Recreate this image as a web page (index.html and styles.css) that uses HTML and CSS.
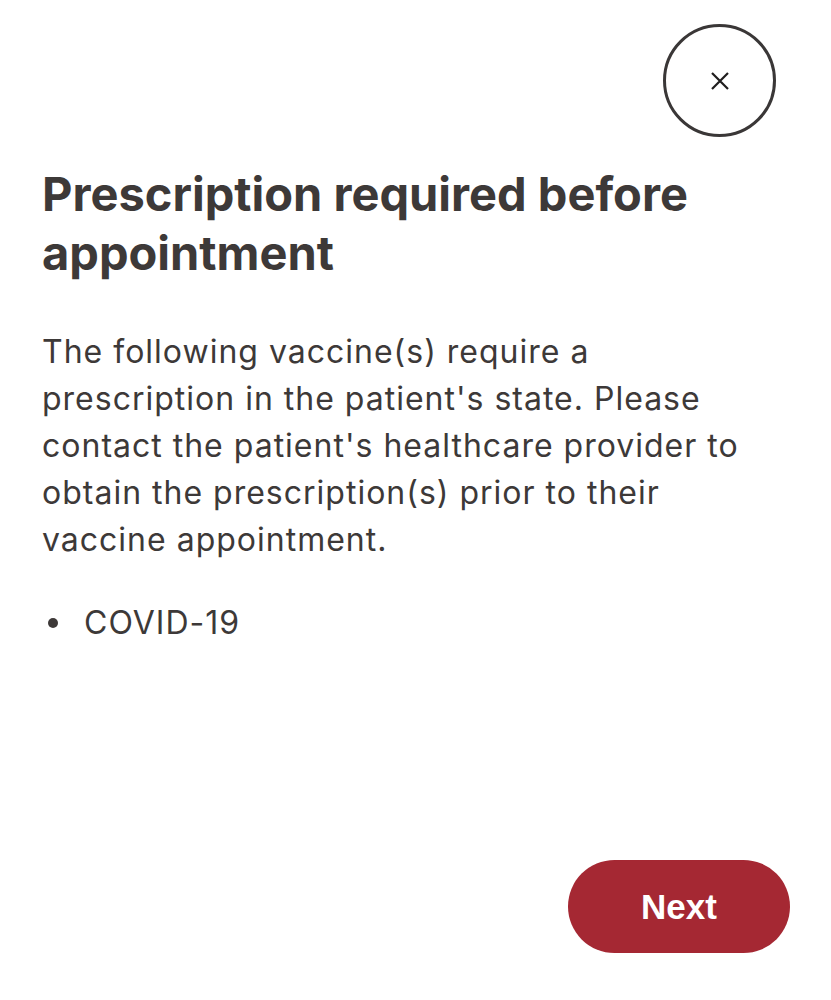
FILE: index.html
```html
<!DOCTYPE html>
<html lang="en">
<head>
<meta charset="utf-8">
<title>Prescription required</title>
<link rel="stylesheet" href="styles.css">
</head>
<body>
<div class="screen">
  <div class="top">
    <button class="close" aria-label="Close">
      <svg width="20" height="20" viewBox="0 0 20 20"><path d="M2 2 L18 18 M18 2 L2 18" stroke="#1f1d1d" stroke-width="2.2" fill="none" stroke-linecap="butt"/></svg>
    </button>
  </div>
  <h1 class="title">Prescription required before appointment</h1>
  <p class="body">The following vaccine(s) require a prescription in the patient's state. Please contact the patient's healthcare provider to obtain the prescription(s) prior to their vaccine appointment.</p>
  <ul class="list">
    <li class="item"><span class="dot"></span><span>COVID-19</span></li>
  </ul>
  <div class="footer">
    <button class="next">Next</button>
  </div>
</div>
</body>
</html>
```
FILE: styles.css
```css
html, body {
  margin: 0;
  padding: 0;
  background: #ffffff;
}
.screen {
  height: 1000px;
  box-sizing: border-box;
  padding: 24px 41px 47px 42px;
  display: flex;
  flex-direction: column;
  font-family: Inter, "Noto Sans", sans-serif;
  color: #3d3938;
}
.top {
  display: flex;
  justify-content: flex-end;
  padding-right: 14px;
}
.close {
  width: 113px;
  height: 113px;
  border-radius: 50%;
  border: 3px solid #3a3737;
  background: #fff;
  display: flex;
  align-items: center;
  justify-content: center;
  padding: 0;
}
.title {
  margin: 27px 0 0 0;
  font-size: 47px;
  line-height: 59px;
  font-weight: 700;
  letter-spacing: 0;
}
.body {
  margin: 46px 0 0 0;
  font-size: 32px;
  line-height: 47px;
  letter-spacing: 1px;
  font-weight: 400;
}
.list {
  margin: 36px 0 0 0;
  padding: 0;
  list-style: none;
  font-size: 32px;
  line-height: 47px;
  letter-spacing: 1px;
}
.item {
  display: flex;
  align-items: center;
  gap: 26px;
}
.dot {
  width: 10px;
  height: 10px;
  border-radius: 50%;
  background: #3d3938;
  margin-left: 6px;
  flex: none;
}
.footer {
  margin-top: auto;
  display: flex;
  justify-content: flex-end;
}
.next {
  width: 222px;
  height: 93px;
  border-radius: 47px;
  border: none;
  background: #a52833;
  color: #fff;
  font-family: "Liberation Sans", Arial, sans-serif;
  font-weight: 700;
  font-size: 35px;
}
```
